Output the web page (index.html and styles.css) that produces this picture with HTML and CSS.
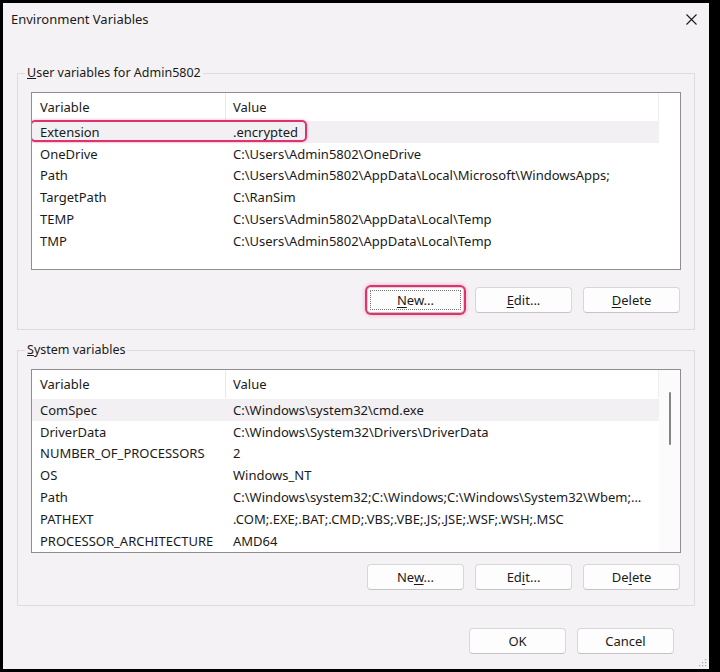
FILE: index.html
```html
<!DOCTYPE html>
<html lang="en">
<head>
    <meta charset="UTF-8">
    <title>Environment Variables</title>
    <link rel="stylesheet" href="styles.css">
</head>
<body>
    <div class="window">
        <div class="titlebar">
            <span class="title">Environment Variables</span>
            <button class="close-button" aria-label="Close">
                <svg width="11" height="11" viewBox="0 0 11 11"><path d="M0.5 0.5 L10.5 10.5 M10.5 0.5 L0.5 10.5" stroke="#1a1a1a" stroke-width="1.1" fill="none"/></svg>
            </button>
        </div>

        <!-- user variables -->
        <fieldset class="group user-group">
            <legend><u>U</u>ser variables for Admin5802</legend>
            <div class="listbox user-list">
                <div class="list-body">
                    <div class="list-head">
                        <div class="cell var">Variable</div>
                        <div class="cell val">Value</div>
                    </div>
                    <div class="row selected">
                        <div class="cell var">Extension</div>
                        <div class="cell val">.encrypted</div>
                    </div>
                    <div class="row">
                        <div class="cell var">OneDrive</div>
                        <div class="cell val">C:\Users\Admin5802\OneDrive</div>
                    </div>
                    <div class="row">
                        <div class="cell var">Path</div>
                        <div class="cell val">C:\Users\Admin5802\AppData\Local\Microsoft\WindowsApps;</div>
                    </div>
                    <div class="row">
                        <div class="cell var">TargetPath</div>
                        <div class="cell val">C:\RanSim</div>
                    </div>
                    <div class="row">
                        <div class="cell var">TEMP</div>
                        <div class="cell val">C:\Users\Admin5802\AppData\Local\Temp</div>
                    </div>
                    <div class="row">
                        <div class="cell var">TMP</div>
                        <div class="cell val">C:\Users\Admin5802\AppData\Local\Temp</div>
                    </div>
                    <div class="mark row-mark"></div>
                </div>
                <div class="gutter"></div>
            </div>
            <div class="buttons">
                <button class="btn marked"><u>N</u>ew...</button>
                <button class="btn"><u>E</u>dit...</button>
                <button class="btn"><u>D</u>elete</button>
            </div>
        </fieldset>

        <!-- system variables -->
        <fieldset class="group system-group">
            <legend><u>S</u>ystem variables</legend>
            <div class="listbox system-list">
                <div class="list-body">
                    <div class="list-head">
                        <div class="cell var">Variable</div>
                        <div class="cell val">Value</div>
                    </div>
                    <div class="row selected">
                        <div class="cell var">ComSpec</div>
                        <div class="cell val">C:\Windows\system32\cmd.exe</div>
                    </div>
                    <div class="row">
                        <div class="cell var">DriverData</div>
                        <div class="cell val">C:\Windows\System32\Drivers\DriverData</div>
                    </div>
                    <div class="row">
                        <div class="cell var">NUMBER_OF_PROCESSORS</div>
                        <div class="cell val">2</div>
                    </div>
                    <div class="row">
                        <div class="cell var">OS</div>
                        <div class="cell val">Windows_NT</div>
                    </div>
                    <div class="row">
                        <div class="cell var">Path</div>
                        <div class="cell val">C:\Windows\system32;C:\Windows;C:\Windows\System32\Wbem;...</div>
                    </div>
                    <div class="row">
                        <div class="cell var">PATHEXT</div>
                        <div class="cell val">.COM;.EXE;.BAT;.CMD;.VBS;.VBE;.JS;.JSE;.WSF;.WSH;.MSC</div>
                    </div>
                    <div class="row">
                        <div class="cell var">PROCESSOR_ARCHITECTURE</div>
                        <div class="cell val">AMD64</div>
                    </div>
                </div>
                <div class="gutter">
                    <div class="thumb"></div>
                </div>
            </div>
            <div class="buttons">
                <button class="btn">Ne<u>w</u>...</button>
                <button class="btn">Ed<u>i</u>t...</button>
                <button class="btn">De<u>l</u>ete</button>
            </div>
        </fieldset>

        <div class="dialog-buttons">
            <button class="btn">OK</button>
            <button class="btn">Cancel</button>
        </div>

        <svg class="grip" width="9" height="9" viewBox="0 0 9 9">
            <rect x="7" y="1" width="1.2" height="1.2" fill="#a8a6a8"/>
            <rect x="4" y="4" width="1.2" height="1.2" fill="#a8a6a8"/>
            <rect x="7" y="4" width="1.2" height="1.2" fill="#a8a6a8"/>
            <rect x="1" y="7" width="1.2" height="1.2" fill="#a8a6a8"/>
            <rect x="4" y="7" width="1.2" height="1.2" fill="#a8a6a8"/>
            <rect x="7" y="7" width="1.2" height="1.2" fill="#a8a6a8"/>
        </svg>
    </div>
</body>
</html>
```

FILE: styles.css
```css
body {
    margin: 0;
    background: #000;
    font-family: 'Noto Sans', 'Open Sans', sans-serif;
    font-size: 12px;
    color: #1a1a1a;
}

.window {
    position: relative;
    width: 706px;
    height: 666px;
    margin: 3px 0 0 3px;
    background: #f5f2f5;
    display: flex;
    flex-direction: column;
}

.titlebar {
    height: 61px;
    display: flex;
    justify-content: space-between;
    align-items: flex-start;
    padding: 7px 12px 0 8px;
    box-sizing: border-box;
}

.title {
    font-size: 13px;
    line-height: 18px;
}

.close-button {
    background: none;
    border: none;
    padding: 0;
    margin-top: 4px;
    width: 11px;
    height: 11px;
    display: flex;
}

.group {
    margin: 0 14px;
    padding: 10px 13px 16px 13px;
    border: 1px solid #dedbde;
    min-width: 0;
}

.group legend {
    font-size: 12.5px;
    line-height: 18px;
    padding: 0 2px;
    margin-left: -6px;
}

.system-group {
    margin-top: 11px;
    padding-bottom: 15px;
}

.listbox {
    position: relative;
    display: flex;
    background: #fff;
    border: 1px solid #8f8d8f;
    overflow: hidden;
}

.user-list {
    height: 176px;
}

.system-list {
    height: 182px;
}

.list-body {
    position: relative;
    flex: 1;
}

.list-head {
    display: grid;
    grid-template-columns: 194px 1fr;
    height: 28px;
    align-items: center;
    border-right: 1px solid #efedef;
}

.list-head .var {
    border-right: 1px solid #e9e7e9;
    height: 28px;
    line-height: 28px;
}

.row {
    display: grid;
    grid-template-columns: 194px 1fr;
    height: 21.8px;
    align-items: center;
}

.row.selected {
    background: #f2f0f3;
}

.system-list .row.selected {
    margin-top: 1px;
}

.cell {
    font-size: 13px;
    white-space: nowrap;
}

.cell.var {
    padding-left: 8px;
}

.cell.val {
    padding-left: 7px;
}

.gutter {
    width: 21px;
}

.system-list .gutter {
    background: #fbfbfb;
}

.thumb {
    width: 2px;
    height: 53px;
    margin: 22px 0 0 10px;
    background: #858385;
    border-radius: 1px;
}

/* annotation boxes */
.row-mark {
    position: absolute;
    left: -2px;
    top: 27px;
    width: 273px;
    height: 18px;
    border: 2px solid #e0336d;
    border-radius: 5px;
    box-shadow: 0 0 3px rgba(224, 51, 109, 0.4);
}

.buttons {
    display: flex;
    justify-content: flex-end;
    gap: 11px;
    margin-top: 17px;
    padding-right: 1px;
}

.system-group .buttons {
    margin-top: 11px;
}

.btn {
    width: 97px;
    height: 26px;
    background: #fdfdfd;
    border: 1px solid #d8d6d8;
    border-bottom-color: #c4c2c4;
    border-radius: 4px;
    font-family: inherit;
    font-size: 13px;
    color: #1a1a1a;
    padding: 0;
}

.btn u {
    text-underline-offset: 2px;
}

.btn.marked {
    outline: 1px dotted #777;
    outline-offset: -4px;
    box-shadow: 0 0 0 2px #e0336d, 0 0 4px 2px rgba(224, 51, 109, 0.35);
}

.dialog-buttons {
    display: flex;
    justify-content: flex-end;
    gap: 11px;
    margin-top: 22px;
    padding-right: 35px;
}

.grip {
    position: absolute;
    right: 2px;
    bottom: 2px;
}
```
